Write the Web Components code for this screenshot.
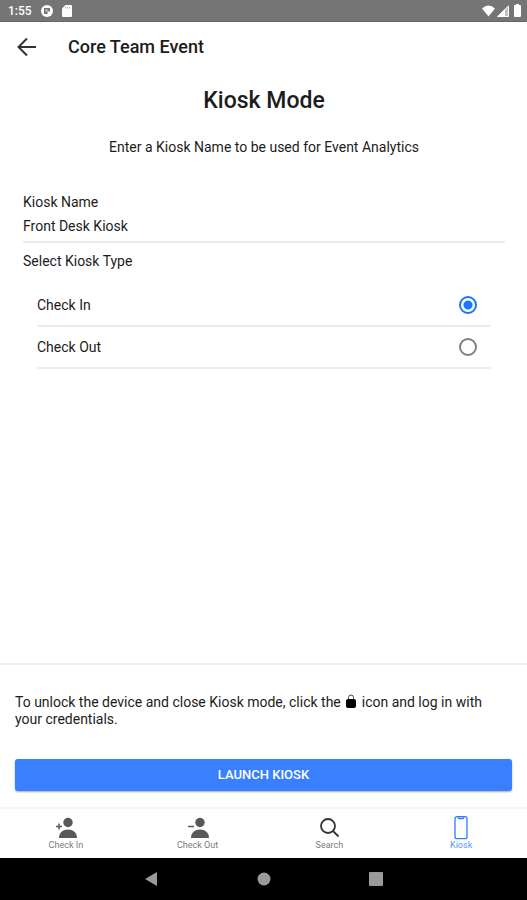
<!DOCTYPE html>
<html lang="en">
<head>
  <meta charset="UTF-8">
  <meta name="viewport" content="width=device-width, initial-scale=1.0">
  <title>Kiosk Mode</title>
  <style>
    body {
      margin: 0;
      background: #fff;
      color: #1c1c1c;
      font-family: Roboto, "Liberation Sans", sans-serif;
      font-size: 14px;
      line-height: 18px;
    }
  </style>
</head>
<body>
  <kiosk-app>
    <status-bar slot="top" time="1:55"></status-bar>
    <app-header slot="top">Core Team Event</app-header>

    <kiosk-form>
      <span slot="title">Kiosk Mode</span>
      <span slot="intro">Enter a Kiosk Name to be used for Event Analytics</span>
    </kiosk-form>

    <launch-panel slot="bottom">Launch Kiosk</launch-panel>
    <tab-bar slot="bottom">
      <tab-item icon="person-add">Check In</tab-item>
      <tab-item icon="person-remove">Check Out</tab-item>
      <tab-item icon="search">Search</tab-item>
      <tab-item icon="phone" active>Kiosk</tab-item>
    </tab-bar>
    <system-nav slot="bottom"></system-nav>
  </kiosk-app>

  <template id="app-template">
    <style>
      :host { display: flex; flex-direction: column; min-height: 100vh; }
      main { flex: 1; }
    </style>
    <slot name="top"></slot>
    <main><slot></slot></main>
    <slot name="bottom"></slot>
  </template>

  <template id="status-template">
    <style>
      :host {
        display: flex;
        align-items: center;
        justify-content: space-between;
        height: 22px;
        padding: 0 5px 0 8px;
        background: #757575;
        border-bottom: 1px solid #666;
        box-sizing: border-box;
        color: #fff;
        font-size: 12px;
        font-weight: 500;
      }
      div { display: flex; align-items: center; gap: 9px; }
      .right { gap: 2px; }
      svg { display: block; fill: #fff; }
    </style>
    <div>
      <span id="time"></span>
      <svg width="12" height="12" viewBox="0 0 12 12"><circle cx="6" cy="6" r="6"/><path d="M3 3h6v3.500H6.500V9H3z" fill="#757575"/><path d="M4.500 4.500h2v2h-2z" fill="#ddd"/></svg>
      <svg width="10" height="12" viewBox="0 0 10 12"><path d="M3.500 0H9a1 1 0 0 1 1 1v10a1 1 0 0 1-1 1H1a1 1 0 0 1-1-1V3.500z"/><path d="M3.500 2v1.500M5.500 2v1.500M7.500 2v1.500" stroke="#bbb"/></svg>
    </div>
    <div class="right">
      <svg width="13" height="12" viewBox="0 0 13 12"><path d="M0 3.500Q6.500-2.500 13 3.500L6.500 11.500z"/></svg>
      <svg width="12" height="12" viewBox="0 0 12 12"><path d="M12 0v12H0z" opacity=".55"/><path d="M8 4v8H0z"/><path d="M11.500 1v10.500H1z" fill="none" stroke="#fff"/></svg>
      <svg width="11" height="13" viewBox="0 0 11 13"><path d="M5 0h3v1h1a1 1 0 0 1 1 1v10a1 1 0 0 1-1 1H4a1 1 0 0 1-1-1V2a1 1 0 0 1 1-1h1z"/></svg>
    </div>
  </template>

  <template id="header-template">
    <style>
      :host { display: block; }
      header { display: flex; align-items: center; gap: 30px; height: 49px; padding: 0 16px; }
      button { padding: 0; border: 0; background: none; color: #333; }
      svg { display: block; }
      span { font-size: 18px; font-weight: 500; }
    </style>
    <header>
      <button type="button" aria-label="Back">
        <svg width="22" height="22" viewBox="0 0 22 22" fill="none" stroke="currentColor" stroke-width="2"><path d="M11 2.500L2.500 11l8.500 8.500M2.500 11H20"/></svg>
      </button>
      <span><slot></slot></span>
    </header>
  </template>

  <template id="form-template">
    <style>
      :host { display: block; padding: 16px 22px 0 23px; }
      h1 { margin: 0; font-size: 23px; font-weight: 500; line-height: 28px; text-align: center; }
      p { margin: 23px 0 37px; text-align: center; }
      label { display: block; }
      input[type=text] {
        display: block;
        width: 100%;
        height: 32px;
        padding: 0;
        border: 0;
        border-bottom: 2px solid #ededed;
        box-sizing: border-box;
        background: none;
        color: inherit;
        font: inherit;
        outline: none;
      }
      fieldset { margin: 9px 0 0; padding: 0; border: 0; }
      legend { padding: 0; }
      .list { padding: 15px 14px 0; }
    </style>
    <h1><slot name="title"></slot></h1>
    <p><slot name="intro"></slot></p>
    <label for="name">Kiosk Name</label>
    <input type="text" id="name" value="Front Desk Kiosk">
    <fieldset>
      <legend>Select Kiosk Type</legend>
      <div class="list">
        <radio-row checked>Check In</radio-row>
        <radio-row>Check Out</radio-row>
      </div>
    </fieldset>
  </template>

  <template id="radio-template">
    <style>
      :host { display: block; border-bottom: 2px solid #ededed; }
      label { display: flex; align-items: center; justify-content: space-between; height: 40px; padding-right: 14px; }
      input {
        appearance: none;
        width: 18px;
        height: 18px;
        margin: 0;
        border: 2px solid #808080;
        border-radius: 50%;
      }
      input:checked {
        border-color: #1a75ff;
        background: radial-gradient(circle, #1a75ff 4px, transparent 5px);
      }
    </style>
    <label><slot></slot><input type="radio"></label>
  </template>

  <template id="launch-template">
    <style>
      :host { display: block; padding: 29px 15px 16px; border-top: 2px solid #eee; }
      p { margin: 0 0 31px; padding-right: 24px; line-height: 17px; }
      svg { vertical-align: -1px; }
      button {
        display: block;
        width: 100%;
        height: 32px;
        padding: 0 0 2px;
        border: 0;
        border-radius: 3px;
        background: #3880ff;
        box-shadow: 0 1px 2px rgba(0, 0, 0, .35);
        color: #fff;
        font: 500 13px Roboto, "Liberation Sans", sans-serif;
        text-transform: uppercase;
      }
    </style>
    <p>
      To unlock the device and close Kiosk mode, click the
      <svg width="14" height="14" viewBox="0 0 14 14"><path d="M4.500 6V3.500a2.500 2.500 0 0 1 5 0V6" fill="none" stroke="#444"/><rect x="2" y="5" width="10" height="9" rx="2" fill="#000"/></svg>
      <span>icon and log in with</span>
      your credentials.
    </p>
    <button type="button"><slot></slot></button>
  </template>

  <template id="tabs-template">
    <style>
      :host { display: block; border-top: 2px solid #f5f5f5; }
      nav { display: grid; grid-template-columns: repeat(4, 1fr); height: 49px; }
    </style>
    <nav><slot></slot></nav>
  </template>

  <template id="tab-template">
    <style>
      :host { display: block; color: #595959; }
      :host([active]) { color: #2f7bff; }
      a {
        display: flex;
        flex-direction: column;
        align-items: center;
        padding-top: 7px;
        color: inherit;
        font-size: 9px;
        line-height: 10px;
        text-decoration: none;
      }
      span { opacity: .8; }
      svg { display: block; }
    </style>
    <a href="#"><svg width="24" height="24" viewBox="0 0 24 24" aria-hidden="true"></svg><span><slot></slot></span></a>
  </template>

  <template id="nav-template">
    <style>
      :host { display: block; background: #000; }
      div { display: flex; justify-content: center; align-items: center; gap: 98px; height: 42px; }
      button { padding: 0; border: 0; background: none; }
      svg { display: block; fill: #9a9a9a; }
    </style>
    <div>
      <button type="button" aria-label="Back"><svg width="14" height="14" viewBox="0 0 14 14"><path d="M12 0v14L0 7z"/></svg></button>
      <button type="button" aria-label="Home"><svg width="14" height="14" viewBox="0 0 14 14"><circle cx="7" cy="7" r="6.500"/></svg></button>
      <button type="button" aria-label="Recent apps"><svg width="14" height="14" viewBox="0 0 14 14"><rect width="14" height="14" rx="1"/></svg></button>
    </div>
  </template>

  <script>
    const person = '<circle cx="14" cy="6.500" r="4.700" fill="currentColor"/><path d="M5 22c0-5.500 4-8.500 9-8.500s9 3 9 8.500z" fill="currentColor"/>';

    const icons = {
      'person-add': person + '<path d="M2 10.500h6M5 7.500v6" stroke="currentColor" stroke-width="1.500"/>',
      'person-remove': person + '<path d="M2 10.500h6" stroke="currentColor" stroke-width="1.500"/>',
      'search': '<g fill="none" stroke="#333" stroke-width="1.800"><circle cx="11" cy="10" r="7"/><path d="M16 15l5.500 5.500"/></g>',
      'phone': '<g fill="none" stroke="currentColor" stroke-width="1.300"><rect x="6" y="0.700" width="12" height="22" rx="2"/><path d="M9 1.200q0 1.300 1.500 1.300h3q1.500 0 1.500-1.300"/></g>'
    };

    // clone a template into an open shadow root
    function attach(el, id) {
      el.attachShadow({mode: 'open'});
      el.shadowRoot.appendChild(document.getElementById(id).content.cloneNode(true));
    }

    class KioskApp extends HTMLElement {
      connectedCallback() { attach(this, 'app-template'); }
    }

    class StatusBar extends HTMLElement {
      connectedCallback() {
        attach(this, 'status-template');
        this.shadowRoot.getElementById('time').textContent = this.getAttribute('time');
      }
    }

    class AppHeader extends HTMLElement {
      connectedCallback() { attach(this, 'header-template'); }
    }

    class RadioRow extends HTMLElement {
      connectedCallback() {
        attach(this, 'radio-template');
        const input = this.shadowRoot.querySelector('input');
        input.checked = this.hasAttribute('checked');
        // radios in separate shadow roots don't group, so clear the siblings here
        input.addEventListener('change', () => {
          for (const row of this.parentNode.children) {
            if (row !== this) row.shadowRoot.querySelector('input').checked = false;
          }
        });
      }
    }

    class KioskForm extends HTMLElement {
      connectedCallback() { attach(this, 'form-template'); }
    }

    class LaunchPanel extends HTMLElement {
      connectedCallback() { attach(this, 'launch-template'); }
    }

    class TabBar extends HTMLElement {
      connectedCallback() { attach(this, 'tabs-template'); }
    }

    class TabItem extends HTMLElement {
      connectedCallback() {
        attach(this, 'tab-template');
        this.shadowRoot.querySelector('svg').innerHTML = icons[this.getAttribute('icon')];
      }
    }

    class SystemNav extends HTMLElement {
      connectedCallback() { attach(this, 'nav-template'); }
    }

    customElements.define('kiosk-app', KioskApp);
    customElements.define('status-bar', StatusBar);
    customElements.define('app-header', AppHeader);
    customElements.define('radio-row', RadioRow);
    customElements.define('kiosk-form', KioskForm);
    customElements.define('launch-panel', LaunchPanel);
    customElements.define('tab-bar', TabBar);
    customElements.define('tab-item', TabItem);
    customElements.define('system-nav', SystemNav);
  </script>
</body>
</html>
